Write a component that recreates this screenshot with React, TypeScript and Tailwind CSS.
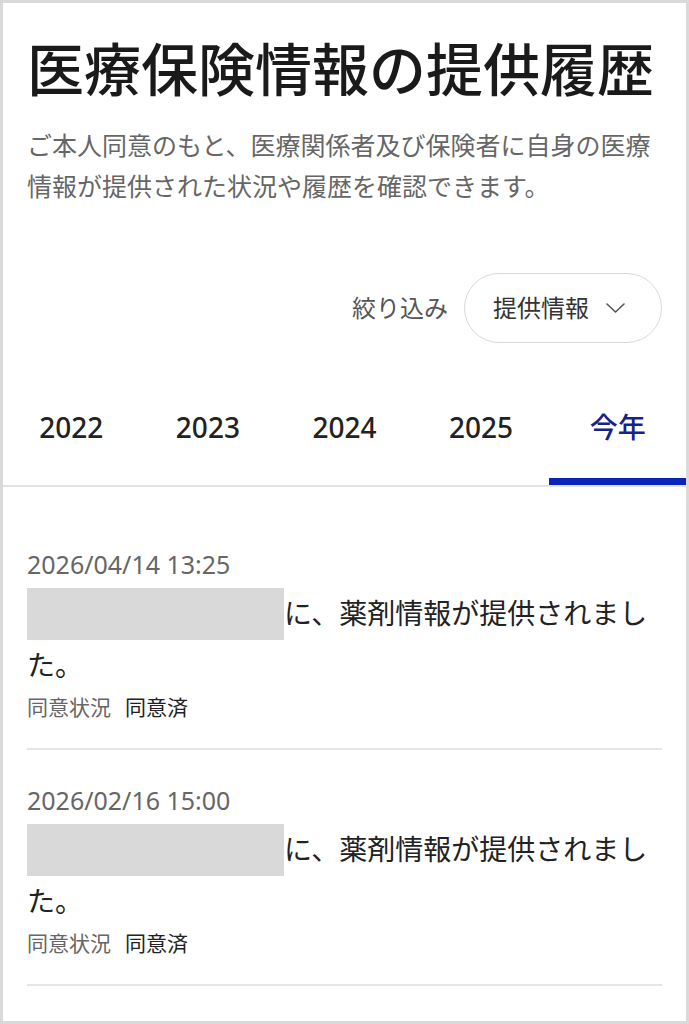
import { useState } from 'react';

const years = ['2022', '2023', '2024', '2025', '今年'];

const records = [
  { date: '2026/04/14 13:25', text: 'に、薬剤情報が提供されました。', status: '同意済' },
  { date: '2026/02/16 15:00', text: 'に、薬剤情報が提供されました。', status: '同意済' },
];

function ChevronDown() {
  return (
    <svg width="27" height="14" viewBox="0 0 27 14" fill="none" stroke="#555" strokeWidth="1.6" strokeLinecap="round" strokeLinejoin="round">
      <polyline points="5,3 13.5,11 22,3" />
    </svg>
  );
}

export default function App() {
  const [activeYear, setActiveYear] = useState('今年');

  return (
    <div className="h-screen bg-white border-[3px] border-[#dadada] overflow-hidden font-['Noto_Sans','Noto_Sans_CJK_JP',sans-serif] text-[#1f1f1f]">
      <div className="px-6 pt-[30px]">
        <h1 className="text-[57px] leading-[72px] font-medium text-[#1a1a1a] whitespace-nowrap">
          医療保険情報の提供履歴
        </h1>
        <p className="mt-[20px] text-[25px] leading-[41px] text-[#666]">
          ご本人同意のもと、医療関係者及び保険者に自身の医療情報が提供された状況や履歴を確認できます。
        </p>

        <div className="mt-[66px] flex items-center justify-end gap-4">
          <span className="text-[24px] text-[#555]">絞り込み</span>
          <button
            type="button"
            className="h-[70px] pl-[28px] pr-[32px] rounded-full border border-[#d9d9d9] flex items-center gap-[13px] bg-white"
          >
            <span className="text-[24px] text-[#333]">提供情報</span>
            <ChevronDown />
          </button>
        </div>

        <div className="-mx-6 mt-[28px] flex border-b-2 border-[#e2e2e2]">
          {years.map((y) => {
            const active = y === activeYear;
            return (
              <button
                key={y}
                type="button"
                onClick={() => setActiveYear(y)}
                className={`flex-1 pt-[36px] pb-[31px] border-b-[7px] text-[28px] leading-[40px] font-medium ${
                  active ? 'border-[#0a24b8] text-[#14228a]' : 'border-transparent text-[#222]'
                }`}
              >
                {y}
              </button>
            );
          })}
        </div>

        <ul className="pt-[27px]">
          {records.map((r) => (
            <li key={r.date} className="pt-[32px] pb-[26px] border-b-2 border-[#e5e5e5]">
              <div className="text-[25px] leading-[36px] text-[#666]">{r.date}</div>
              <p className="mt-[6px] text-[28px] leading-[50px] text-[#222]">
                <span className="inline-block w-[257px] h-[52px] bg-[#d9d9d9] align-top" />
                {r.text}
              </p>
              <div className="mt-[2px] flex items-center gap-[14px] text-[21px] leading-[30px]">
                <span className="text-[#666]">同意状況</span>
                <span className="text-[#222]">{r.status}</span>
              </div>
            </li>
          ))}
        </ul>
      </div>
    </div>
  );
}
